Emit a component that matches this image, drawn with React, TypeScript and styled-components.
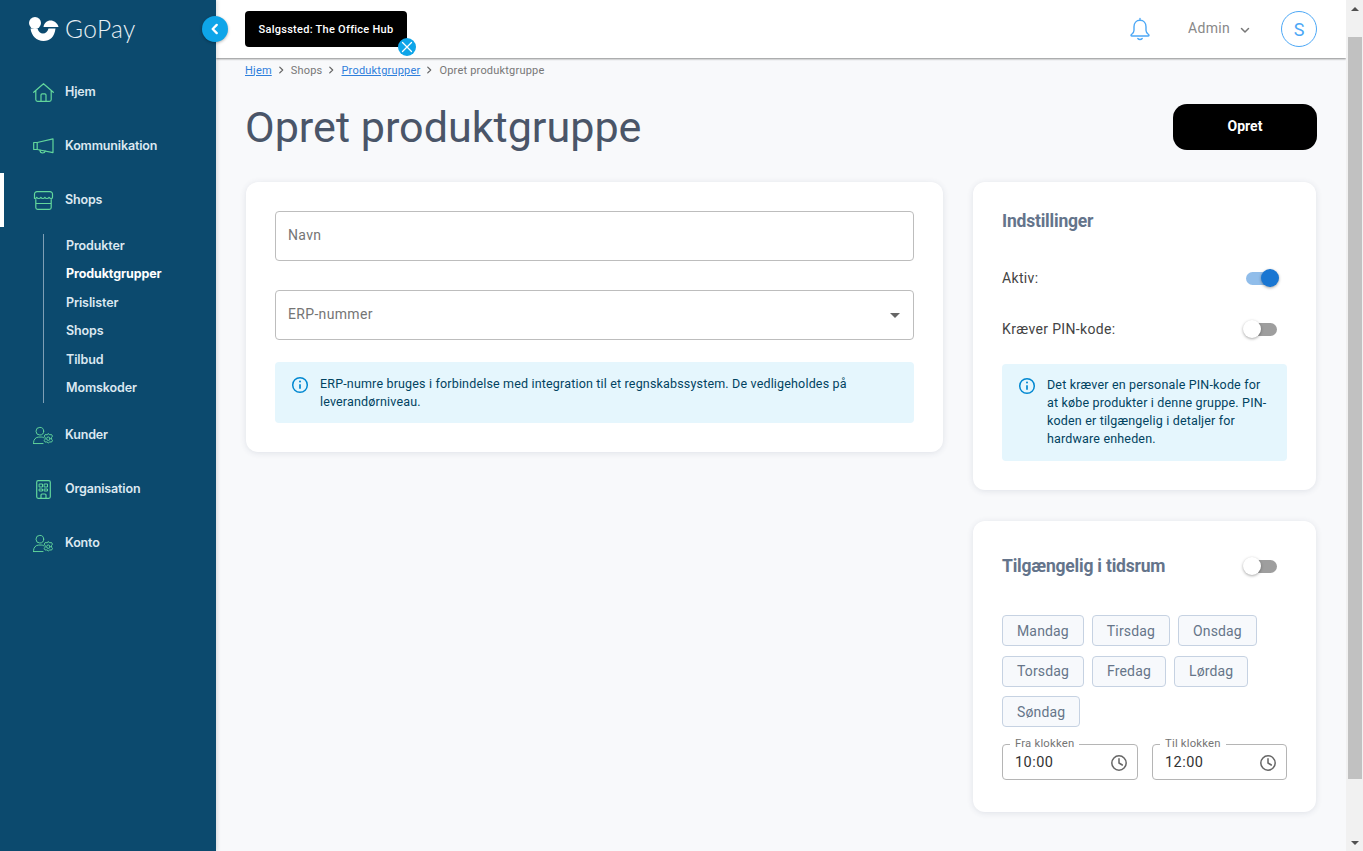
import React from "react";
import styled, { createGlobalStyle } from "styled-components";

const Global = createGlobalStyle`
  html, body { margin: 0; padding: 0; height: 100%; overflow: hidden; }
  body { font-family: Roboto, "Liberation Sans", sans-serif; background: #f8f9fb; }
  #root { height: 100%; }
  * { box-sizing: border-box; }
`;

const Page = styled.div`display: flex; width: 1363px; height: 851px; overflow: hidden;`;
const Sidebar = styled.aside`
  position: relative; width: 216px; flex: none; background: #0c4a6e; color: #dce8f1;
  font-family: Inter, Roboto, sans-serif; box-shadow: 1px 0 4px rgba(0,0,0,.15); z-index: 3;
`;
const Brand = styled.div`display: flex; align-items: center; height: 60px; padding: 0 0 2px 29px; gap: 6px;`;
const BrandName = styled.span`font-family: Lato, sans-serif; font-weight: 300; font-size: 24.5px; color: #e8f0f4; letter-spacing: .4px; margin-top: -2px;`;
const Collapse = styled.button`
  position: absolute; top: 16px; right: -12px; width: 26px; height: 26px; border-radius: 50%; border: 0; padding: 0;
  background: #0ea5e9; color: #fff; display: flex; align-items: center; justify-content: center; box-shadow: 0 1px 3px rgba(0,0,0,.3);
`;
const Nav = styled.nav`display: flex; flex-direction: column; padding-top: 5px;`;
const NavRow = styled.div<{ $active?: boolean }>`
  height: 54px; display: flex; align-items: center; gap: 11px; padding: 0 0 2px ${p => p.$active ? 29 : 33}px;
  border-left: ${p => p.$active ? "4px solid #fff" : "0"}; font-size: 12.5px; font-weight: 600; letter-spacing: -.15px;
`;
const IconSlot = styled.span`width: 21px; height: 22px; display: flex; align-items: center; justify-content: center; color: #62d69c; margin-top: 2px;`;
const SubList = styled.div`
  margin: 7px 0 5px 43px; border-left: 1px solid #7f9fb5; height: 169px; padding: 3px 0 6px 22px;
  display: flex; flex-direction: column; justify-content: space-between;
`;
const SubItem = styled.div<{ $active?: boolean }>`
  font-size: 12.5px; line-height: 18px; letter-spacing: -.1px; font-weight: ${p => p.$active ? 700 : 600}; color: ${p => p.$active ? "#fff" : "#dce8f1"};
`;

const Main = styled.div`flex: 1; min-width: 0; display: flex; flex-direction: column;`;
const Header = styled.header`
  height: 58px; flex: none; background: #fff; display: flex; align-items: center; padding: 0 29px;
  box-shadow: 0 1px 2px rgba(0,0,0,.45); z-index: 2;
`;
const ShopChip = styled.div`
  position: relative; width: 162px; height: 36px; background: #000; color: #fff; border-radius: 4px;
  display: flex; align-items: center; justify-content: center; font-size: 11px; font-weight: 500; letter-spacing: .27px;
`;
const ChipClose = styled.span`
  position: absolute; right: -9px; bottom: -9px; width: 18px; height: 18px; border-radius: 50%; background: #0ea5e9;
  display: flex; align-items: center; justify-content: center; color: #fff;
`;
const HeaderEnd = styled.div`margin-left: auto; display: flex; align-items: center;`;
const Bell = styled.span`display: flex; color: #4da8f6; margin-right: 37px;`;
const AdminName = styled.span`font-size: 14px; color: #888; letter-spacing: .3px; margin-top: -2px;`;
const AdminCaret = styled.span`display: flex; color: #777; margin: 1px 30px 0 9px;`;
const Avatar = styled.span`
  width: 36px; height: 36px; border-radius: 50%; border: 1px solid #4da8f6; color: #4da8f6; font-size: 18px;
  display: flex; align-items: center; justify-content: center;
`;

const Content = styled.main`flex: 1; padding: 0 29px 0 30px; background: #f8f9fb; overflow: hidden;`;
const Crumbs = styled.div`display: flex; align-items: center; height: 24px; margin-left: -1px; font-size: 11px; letter-spacing: .2px; color: #777;`;
const CrumbLink = styled.a`color: #2f7fdc; text-decoration: underline;`;
const CrumbSep = styled.span`display: flex; color: #666; margin: 0 5px 0 4px;`;
const TitleRow = styled.div`display: flex; align-items: center; justify-content: space-between; height: 46px; margin-top: 22px;`;
const Title = styled.h1`margin: 2px 0 0 -1px; font-size: 43.1px; font-weight: 400; color: #4a5568; line-height: 46px;`;
const PrimaryButton = styled.button`
  width: 144px; height: 46px; border: 0; border-radius: 14px; background: #000; color: #fff; padding: 0 0 2px;
  font: 700 14px Roboto, sans-serif;
`;
const Columns = styled.div`display: grid; grid-template-columns: 697px 343px; gap: 30px; margin-top: 32px; align-items: start;`;
const Stack = styled.div`display: flex; flex-direction: column; gap: 31px;`;
const Card = styled.section`background: #fff; border-radius: 12px; box-shadow: 0 1px 6px rgba(40,60,90,.12); padding: 29px;`;
const FieldBox = styled.div<{ $tight?: boolean }>`
  height: 50px; border: 1px solid #bdbdbd; border-radius: 4px; display: flex; align-items: center; justify-content: space-between;
  padding: 0 12px 2px; font-size: 14px; color: #757575; letter-spacing: .33px; margin-bottom: ${p => p.$tight ? 22 : 29}px;
`;
const Caret = styled.span`width: 0; height: 0; border-left: 5px solid transparent; border-right: 5px solid transparent; border-top: 5px solid #666; margin: 2px 1px 0 0;`;
const InfoBox = styled.div<{ $inset?: boolean }>`
  display: flex; background: #e5f6fd; border-radius: 4px; color: #014361; font-size: 12.5px; line-height: 18px; letter-spacing: .17px;
  padding: ${p => p.$inset ? "12px 14px 13px 16px" : "13px 16px 12px 16px"};
`;
const InfoIcon = styled.span`display: flex; flex: none; height: 18px; color: #0288d1; margin: 1px 11px 0 0;`;
const CardHead = styled.h2`margin: 0; font-size: 17.5px; font-weight: 700; color: #64748b; line-height: 20px; letter-spacing: -.2px;`;
const SettingRow = styled.div`display: flex; align-items: center; justify-content: space-between; font-size: 14px; color: #444; letter-spacing: .35px; height: 24px; padding-right: 10px;`;
const SwitchTrack = styled.span<{ $on?: boolean }>`
  position: relative; width: 31px; height: 13px; border-radius: 7px; background: ${p => p.$on ? "#90bdea" : "#9e9e9e"}; display: block;
`;
const SwitchKnob = styled.span<{ $on?: boolean }>`
  position: absolute; top: -3px; left: ${p => p.$on ? "15px" : "-3px"}; width: 18px; height: 18px; border-radius: 50%;
  background: ${p => p.$on ? "#1976d2" : "#fff"}; box-shadow: 0 1px 3px rgba(0,0,0,.35);
`;
const SettingsBody = styled.div`display: flex; flex-direction: column; gap: 27px; margin: 35px 0 23px;`;
const WindowHead = styled.div`display: flex; align-items: center; justify-content: space-between; height: 30px; padding-right: 10px; margin-top: 1px;`;
const Days = styled.div`display: flex; flex-wrap: wrap; gap: 9.5px 8px; margin-top: 34px; padding-right: 10px;`;
const Day = styled.span`
  height: 31px; padding: 0 14px; display: flex; align-items: center; background: #f7f9fc; border: 1px solid #c6d2e2; border-radius: 4px;
  font-size: 14px; letter-spacing: .15px; color: #667589;
`;
const TimeRow = styled.div`display: grid; grid-template-columns: 136px 135px; gap: 14px; margin: 11px 0 3px;`;
const TimeField = styled.fieldset`
  margin: 0; height: 42px; padding: 0 9px 0 12px; border: 1px solid #b5b5b5; border-radius: 4px;
  display: flex; align-items: center; justify-content: space-between; min-width: 0;
`;
const TimeLegend = styled.legend`font-size: 11.3px; line-height: 12px; letter-spacing: .2px; color: #757575; padding: 0 5px; margin-left: -5px; height: 12px;`;
const TimeValue = styled.span`font-size: 14.5px; color: #333; letter-spacing: .45px; margin-top: -4px;`;
const TimeIcon = styled.span`display: flex; color: #666; margin-top: -4px;`;

const Scrollbar = styled.div`width: 17px; flex: none; background: #f1f1f1; display: flex; flex-direction: column; align-items: stretch; z-index: 4;`;
const ScrollEnd = styled.div`height: 17px; display: flex; align-items: center; justify-content: center;`;
const ScrollGap = styled.div<{ $h?: number }>`height: ${p => p.$h}px; flex: none;`;
const ScrollThumb = styled.div`height: 742px; background: #c1c1c1; margin: 0 1px 0 2px;`;
const ArrowUp = styled.span`width: 0; height: 0; border-left: 4px solid transparent; border-right: 4px solid transparent; border-bottom: 4px solid #505050;`;
const ArrowDown = styled.span`width: 0; height: 0; border-left: 4px solid transparent; border-right: 4px solid transparent; border-top: 4px solid #505050;`;

const Logo = () => (
  <svg width="30" height="26" viewBox="0 0 30 26" fill="#fff">
    <circle cx="6" cy="7" r="6" />
    <path d="M14.5 11C15 7 18 4.500 21.500 4.500S28.500 7 29.500 11Z" />
    <path d="M1.500 12.500H8.500C9.500 16 11.500 17.500 14 17.500C16.500 17.500 18.500 16 19.500 12.500H26.500C25.500 21 21 25 14.500 25C7.500 25 2.500 20 1.500 12.500Z" />
  </svg>
);
const s = { fill: "none", stroke: "currentColor", strokeWidth: 1.2, strokeLinecap: "round" as const, strokeLinejoin: "round" as const };
const House = () => (
  <svg width="21" height="19" viewBox="0 0 21 19" {...s}>
    <path d="M.7 9.300 10.500.7l9.800 8.600M2.800 7.800v8.700a1.800 1.800 0 0 0 1.800 1.800h11.800a1.800 1.800 0 0 0 1.800-1.800V7.800" />
    <path d="M8 18.300v-6.200a1.200 1.200 0 0 1 1.200-1.200h2.600a1.200 1.200 0 0 1 1.200 1.200v6.200" />
  </svg>
);
const Megaphone = () => (
  <svg width="21" height="16" viewBox="0 0 21 16" {...s}>
    <path d="M.7 4.500h3.500L20 .8v13.800L4.200 11.500H.7zM4.200 4.500v7" />
    <path d="M7 12c0 2 1.200 3 2.600 3s2.400-.8 2.600-1.900" />
  </svg>
);
const StoreIcon = () => (
  <svg width="21" height="19" viewBox="0 0 21 19" {...s}>
    <path d="M4 .7h13a2.500 2.500 0 0 1 2.500 2.500v3c0 .8-.7 1.300-1.400 1.300-.9 0-1.600-.5-2-1.200-.4.7-1.200 1.200-2.200 1.200-.9 0-1.700-.5-2-1.200-.4.700-1.100 1.200-2 1.200s-1.700-.5-2-1.200c-.4.7-1.200 1.200-2.200 1.200-.9 0-1.600-.5-2-1.200-.3.700-1.100 1.200-1.800 1.200S1.500 7 1.500 6.200v-3A2.500 2.500 0 0 1 4 .7z" />
    <path d="M2.800 8.500v8a1.800 1.800 0 0 0 1.800 1.800h11.800a1.800 1.800 0 0 0 1.800-1.800v-8M2.800 12.500h15.400" />
  </svg>
);
const UserGear = () => (
  <svg width="23" height="19" viewBox="0 0 23 19" {...s} strokeWidth={1.05}>
    <circle cx="7.500" cy="4.800" r="4.200" />
    <path d="M.6 18.300v-.8C.6 14 3 11.200 6.300 11.200h2.800c.9 0 1.700.2 2.400.6M.6 18.300h10.400" />
    <path d="m16.800 7.600 1.600 1.100 1.900-.2 1 1.700-1 1.500v1.800l1 1.500-1 1.700-1.900-.2-1.600 1.100-1.600-1.100-1.900.2-1-1.700 1-1.500v-1.800l-1-1.500 1-1.700 1.900.2z" />
    <circle cx="16.800" cy="13" r="1.900" />
  </svg>
);
const Building = () => (
  <svg width="15" height="19" viewBox="0 0 15 19" {...s}>
    <rect x=".7" y=".7" width="13.600" height="17.600" rx="1.500" />
    <rect x="3.500" y="4" width="3" height="3" strokeWidth="1" />
    <rect x="8.500" y="4" width="3" height="3" strokeWidth="1" />
    <rect x="3.500" y="9" width="3" height="2" strokeWidth="1" />
    <rect x="8.500" y="9" width="3" height="2" strokeWidth="1" />
    <path d="M5 18.300v-3.300a1 1 0 0 1 1-1h3a1 1 0 0 1 1 1v3.300" />
  </svg>
);
const Chevron = ({ dir, size, w = 1.5 }: { dir: "l" | "r" | "d"; size: number; w?: number }) => (
  <svg width={size} height={size} viewBox="0 0 12 12" fill="none" stroke="currentColor" strokeWidth={w} strokeLinecap="round" strokeLinejoin="round">
    <path d={dir === "l" ? "M7.500 2.500 4 6l3.500 3.500" : dir === "r" ? "M4.500 2.500 8 6l-3.500 3.500" : "M2.500 4.500 6 8l3.500-3.500"} />
  </svg>
);
const Cross = () => (
  <svg width="12" height="12" viewBox="0 0 12 12" stroke="currentColor" strokeWidth="1.300" strokeLinecap="round"><path d="M1.500 1.500l9 9M10.500 1.500l-9 9" /></svg>
);
const BellIcon = () => (
  <svg width="22" height="24" viewBox="0 0 22 24" fill="none" stroke="currentColor" strokeWidth="1.400" strokeLinejoin="round" strokeLinecap="round">
    <path d="M11 1.500v1.800M11 3.300c-3.700 0-6 2.800-6 6.500v3.500c0 1.700-.9 3.200-2.500 4.200-.9.600-.5 1.500.4 1.500h16.200c.9 0 1.300-.9.400-1.500-1.600-1-2.500-2.500-2.500-4.200V9.800c0-3.700-2.300-6.500-6-6.500z" />
    <path d="M8.800 21.500c.6.700 1.300 1 2.200 1s1.600-.3 2.200-1" />
  </svg>
);
const InfoGlyph = () => (
  <svg width="18" height="18" viewBox="0 0 18 18" fill="none" stroke="currentColor">
    <circle cx="9" cy="9" r="7.300" strokeWidth="1.500" />
    <path d="M9 8.200v4.600" strokeWidth="1.700" />
    <circle cx="9" cy="5.600" r="1" fill="currentColor" stroke="none" />
  </svg>
);
const Clock = () => (
  <svg width="18" height="18" viewBox="0 0 18 18" fill="none" stroke="currentColor" strokeWidth="1.500">
    <circle cx="9" cy="9" r="7.200" />
    <path d="M9 4.800V9l3.300 2" strokeLinecap="round" />
  </svg>
);
const Switch = ({ on }: { on?: boolean }) => (
  <SwitchTrack $on={on}><SwitchKnob $on={on} /></SwitchTrack>
);

const DAYS = ["Mandag", "Tirsdag", "Onsdag", "Torsdag", "Fredag", "Lørdag", "Søndag"];
const SUB = ["Produkter", "Produktgrupper", "Prislister", "Shops", "Tilbud", "Momskoder"];

export default function App() {
  return (
    <Page>
      <Global />
      <Sidebar>
        <Brand><Logo /><BrandName>GoPay</BrandName></Brand>
        <Collapse aria-label="Skjul menu"><Chevron dir="l" size={14} w={2} /></Collapse>
        <Nav>
          <NavRow><IconSlot><House /></IconSlot>Hjem</NavRow>
          <NavRow><IconSlot><Megaphone /></IconSlot>Kommunikation</NavRow>
          <NavRow $active><IconSlot><StoreIcon /></IconSlot>Shops</NavRow>
          <SubList>
            {SUB.map(x => <SubItem key={x} $active={x === "Produktgrupper"}>{x}</SubItem>)}
          </SubList>
          <NavRow><IconSlot><UserGear /></IconSlot>Kunder</NavRow>
          <NavRow><IconSlot><Building /></IconSlot>Organisation</NavRow>
          <NavRow><IconSlot><UserGear /></IconSlot>Konto</NavRow>
        </Nav>
      </Sidebar>
      <Main>
        <Header>
          <ShopChip>Salgssted: The Office Hub<ChipClose><Cross /></ChipClose></ShopChip>
          <HeaderEnd>
            <Bell><BellIcon /></Bell>
            <AdminName>Admin</AdminName>
            <AdminCaret><Chevron dir="d" size={12} /></AdminCaret>
            <Avatar>S</Avatar>
          </HeaderEnd>
        </Header>
        <Content>
          <Crumbs>
            <CrumbLink>Hjem</CrumbLink><CrumbSep><Chevron dir="r" size={10} /></CrumbSep>
            <span>Shops</span><CrumbSep><Chevron dir="r" size={10} /></CrumbSep>
            <CrumbLink>Produktgrupper</CrumbLink><CrumbSep><Chevron dir="r" size={10} /></CrumbSep>
            <span>Opret produktgruppe</span>
          </Crumbs>
          <TitleRow>
            <Title>Opret produktgruppe</Title>
            <PrimaryButton>Opret</PrimaryButton>
          </TitleRow>
          <Columns>
            <Card>
              <FieldBox>Navn</FieldBox>
              <FieldBox $tight>ERP-nummer<Caret /></FieldBox>
              <InfoBox>
                <InfoIcon><InfoGlyph /></InfoIcon>
                <span>ERP-numre bruges i forbindelse med integration til et regnskabssystem. De vedligeholdes på leverandørniveau.</span>
              </InfoBox>
            </Card>
            <Stack>
              <Card>
                <CardHead>Indstillinger</CardHead>
                <SettingsBody>
                  <SettingRow>Aktiv:<Switch on /></SettingRow>
                  <SettingRow>Kræver PIN-kode:<Switch /></SettingRow>
                </SettingsBody>
                <InfoBox $inset>
                  <InfoIcon><InfoGlyph /></InfoIcon>
                  <span>Det kræver en personale PIN-kode for at købe produkter i denne gruppe. PIN-koden er tilgængelig i detaljer for hardware enheden.</span>
                </InfoBox>
              </Card>
              <Card>
                <WindowHead><CardHead>Tilgængelig i tidsrum</CardHead><Switch /></WindowHead>
                <Days>{DAYS.map(d => <Day key={d}>{d}</Day>)}</Days>
                <TimeRow>
                  <TimeField><TimeLegend>Fra klokken</TimeLegend><TimeValue>10:00</TimeValue><TimeIcon><Clock /></TimeIcon></TimeField>
                  <TimeField><TimeLegend>Til klokken</TimeLegend><TimeValue>12:00</TimeValue><TimeIcon><Clock /></TimeIcon></TimeField>
                </TimeRow>
              </Card>
            </Stack>
          </Columns>
        </Content>
      </Main>
      <Scrollbar>
        <ScrollEnd><ArrowUp /></ScrollEnd>
        <ScrollGap $h={20} />
        <ScrollThumb />
        <ScrollGap $h={55} />
        <ScrollEnd><ArrowDown /></ScrollEnd>
      </Scrollbar>
    </Page>
  );
}
